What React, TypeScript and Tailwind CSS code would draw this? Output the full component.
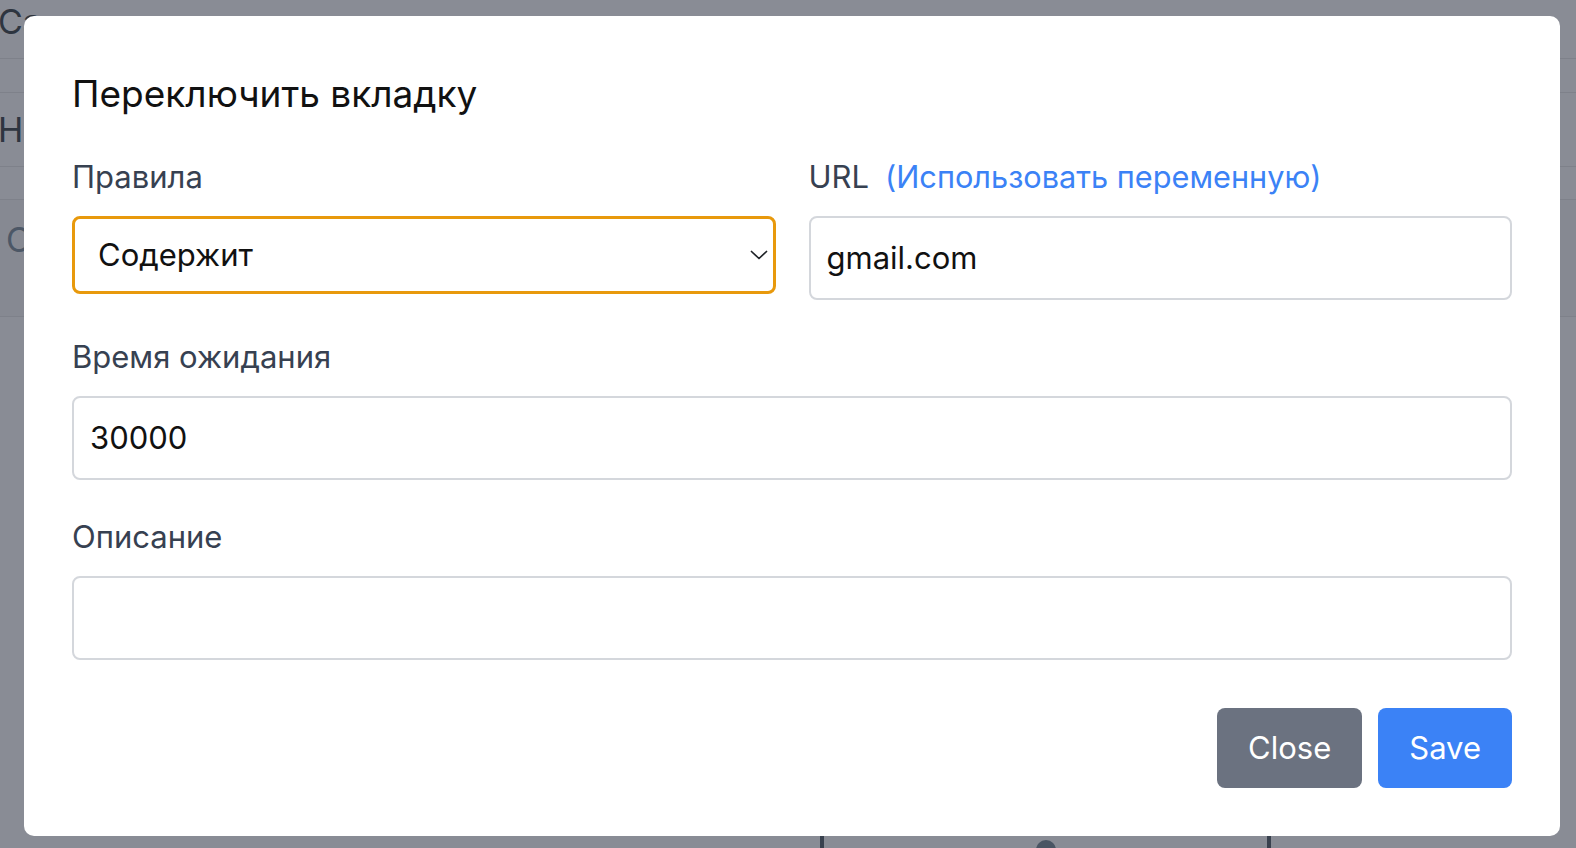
import React from "react";

function Chevron() {
  return (
    <svg width="18" height="10" viewBox="0 0 18 10" fill="none" className="shrink-0">
      <path d="M1.5 1.5 L9 8.5 L16.5 1.5" stroke="#1f2328" strokeWidth="1.7" strokeLinecap="round" strokeLinejoin="round" />
    </svg>
  );
}

export default function App() {
  return (
    <div className="relative h-[848px] w-[1576px] overflow-hidden bg-[#898c95] font-[Inter,'Noto_Sans',sans-serif]">
      {/* underlying page, dimmed by the overlay */}
      <div className="flex flex-col">
        <div className="flex h-[59px] items-start border-b border-[#7e818a] pt-[2px]">
          <span className="-ml-[2px] text-[34px] leading-[40px] text-[#2e3540]">Ca</span>
        </div>
        <div className="h-[34px] border-b border-[#7e818a]" />
        <div className="flex h-[74px] items-center border-b border-[#7e818a]">
          <span className="-ml-[2px] text-[34px] leading-[40px] text-[#2e3540]">He</span>
        </div>
        <div className="h-[33px] border-b border-[#7e818a]" />
        <div className="flex h-[117px] items-start border-b border-[#7e818a] bg-[#868992] pt-[20px]">
          <span className="ml-[6px] text-[34px] leading-[40px] text-[#4c5766]">Co</span>
        </div>
        <div className="h-[518px]" />
        <div className="flex">
          <div className="ml-[820px] flex h-[14px] w-[451px] justify-center border-x-4 border-[#39414e]">
            <div className="mt-[5px] h-[20px] w-[20px] rounded-full bg-[#4a5563]" />
          </div>
        </div>
      </div>

      {/* modal */}
      <div className="absolute left-[24px] top-[16px] w-[1536px] rounded-[10px] bg-white px-[48px] pb-[48px] pt-[55px]">
        <h2 className="text-[37px] font-normal leading-[45px] text-[#111111]">Переключить вкладку</h2>

        <div className="mt-[43px] grid grid-cols-2 gap-x-[33px]">
          <div className="flex flex-col">
            <label className="text-[31px] leading-[36px] text-[#374151]">Правила</label>
            <div className="mt-[21px] flex h-[78px] items-center justify-between rounded-[8px] border-[3px] border-[#e8990c] pl-[23px] pr-[5px]">
              <span className="text-[31px] leading-[40px] text-[#111111]">Содержит</span>
              <Chevron />
            </div>
          </div>
          <div className="flex flex-col">
            <label className="text-[31px] leading-[36px] text-[#374151]">
              URL<span className="ml-[16px] text-[30.7px] text-[#3b82f6]">(Использовать переменную)</span>
            </label>
            <div className="mt-[21px] flex h-[84px] items-center rounded-[8px] border-2 border-[#d4d7dc] px-[16px]">
              <span className="text-[31px] leading-[40px] text-[#111111]">gmail.com</span>
            </div>
          </div>
        </div>

        <div className="mt-[39px] flex flex-col">
          <label className="text-[31px] leading-[36px] text-[#374151]">Время ожидания</label>
          <div className="mt-[21px] flex h-[84px] items-center rounded-[8px] border-2 border-[#d4d7dc] px-[16px]">
            <span className="text-[31px] leading-[40px] text-[#111111]">30000</span>
          </div>
        </div>

        <div className="mt-[39px] flex flex-col">
          <label className="text-[31px] leading-[36px] text-[#374151]">Описание</label>
          <div className="mt-[21px] h-[84px] rounded-[8px] border-2 border-[#d4d7dc]" />
        </div>

        <div className="mt-[48px] flex justify-end gap-[16px]">
          <button className="h-[80px] rounded-[8px] bg-[#6b7280] px-[31px] text-[31px] text-white">Close</button>
          <button className="h-[80px] rounded-[8px] bg-[#3b82f6] px-[31px] text-[31px] text-white">Save</button>
        </div>
      </div>
    </div>
  );
}
